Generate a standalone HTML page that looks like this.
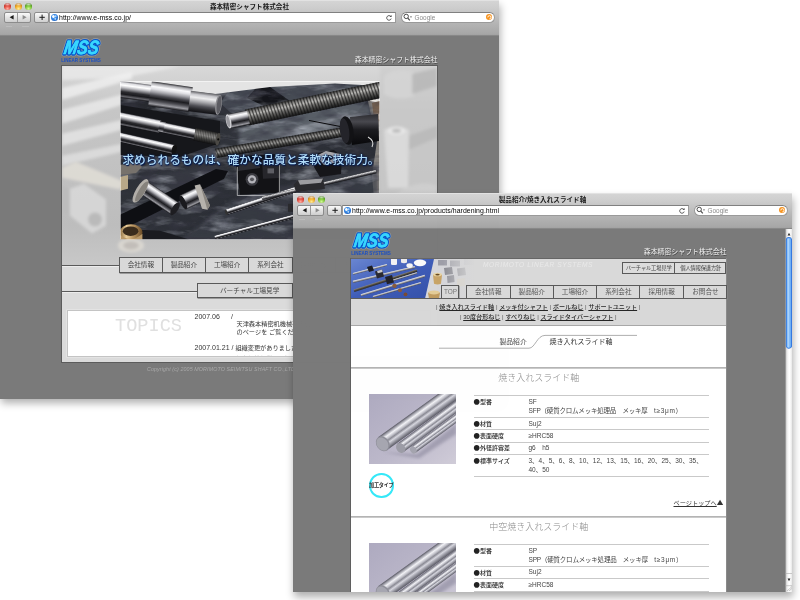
<!DOCTYPE html>
<html lang="ja">
<head>
<meta charset="utf-8">
<title>森本精密シャフト株式会社</title>
<style>
html,body{margin:0;padding:0;}
body{width:800px;height:600px;background:#fff;position:relative;overflow:hidden;
 font-family:"Liberation Sans","Noto Sans CJK JP",sans-serif;-webkit-font-smoothing:antialiased;}
.abs,.win *{position:absolute;box-sizing:border-box;}
.win u,.win br,.win span.s{position:static;}
.win{position:absolute;width:499px;background:#7a7a7a;overflow:hidden;will-change:transform;opacity:.9999;}
.shadow{position:absolute;box-shadow:1px 5px 8px 0 rgba(0,0,0,.32);}
.tb{left:0;top:0;width:499px;height:36px;background:linear-gradient(#ececec 0,#d4d4d4 1.2px,#cdcdcd 8px,#b6b6b6 22px,#a6a6a6 34.4px,#8e8e8e 35.3px,#7a7a7a 36px);}
.tl{width:7px;height:7px;border-radius:50%;top:2.5px;}
.tl.r{left:4px;background:radial-gradient(ellipse 60% 28% at 50% 16%,rgba(255,255,255,.75) 0,rgba(255,255,255,0) 100%),radial-gradient(circle at 50% 82%,#ffb0a4 0,#e24a3e 45%,#b8281e 72%,#7a1610 100%);}
.tl.y{left:14.5px;background:radial-gradient(ellipse 60% 28% at 50% 16%,rgba(255,255,255,.75) 0,rgba(255,255,255,0) 100%),radial-gradient(circle at 50% 82%,#ffee9c 0,#f2ac24 45%,#c27a0c 72%,#7e4c04 100%);}
.tl.g{left:25px;background:radial-gradient(ellipse 60% 28% at 50% 16%,rgba(255,255,255,.75) 0,rgba(255,255,255,0) 100%),radial-gradient(circle at 50% 82%,#d8fa9c 0,#78c432 45%,#468a18 72%,#285808 100%);}
.title{left:0;top:1.5px;width:499px;text-align:center;font-size:6.6px;line-height:9px;color:#1a1a1a;font-weight:700;letter-spacing:0;white-space:nowrap;}
.btn{top:12.2px;height:10.4px;border:.6px solid #8c8c8c;border-radius:2px;background:linear-gradient(#fafafa,#e4e4e4 50%,#cfcfcf);}
.url{left:49px;top:12.2px;width:347.4px;height:10.4px;background:#fff;border:.6px solid #9a9a9a;border-top-color:#808080;}
.urlt{left:59px;top:12.7px;font-size:6.9px;line-height:10px;color:#000;white-space:nowrap;letter-spacing:.05px;}
.srch{left:400.6px;top:12.2px;width:94.2px;height:10.4px;background:#fff;border:.6px solid #9a9a9a;border-top-color:#808080;border-radius:5.5px;}
.goog{left:414.6px;top:12.7px;font-size:6.4px;line-height:10px;color:#8a8a8a;}
.glob{left:50.8px;top:13.6px;width:7.4px;height:7.4px;border-radius:50%;background:radial-gradient(ellipse 22% 26% at 34% 36%,#fff 0,rgba(255,255,255,.9) 60%,rgba(255,255,255,0) 100%),radial-gradient(ellipse 20% 16% at 66% 30%,#f0f8ff 0,rgba(255,255,255,0) 100%),radial-gradient(ellipse 18% 20% at 62% 70%,#e4f2ff 0,rgba(255,255,255,0) 100%),radial-gradient(circle at 45% 40%,#6ab4f8 0,#2f80e0 50%,#1650a8 100%);}
.org{left:486.2px;top:14.3px;width:6.2px;height:6.2px;border-radius:50%;background:#f7931e;}
.cname{font-size:6.9px;line-height:9px;color:#f2f2f2;white-space:nowrap;text-align:right;text-shadow:.5px .5px .5px #444;}
.tab1{top:257.5px;height:15px;line-height:13.6px;box-shadow:.6px .8px 0 #8a8a8a;border:.9px solid #595959;background:#d9d9d9;font-size:6.6px;color:#444;text-align:center;white-space:nowrap;}
.nw{font-size:7px;line-height:9px;color:#333;white-space:nowrap;}
.tabs1{border:.9px solid #595959;background:#d9d9d9;display:flex;box-shadow:.6px .8px 0 #8a8a8a;}
.tabs1 span{position:static;display:block;width:43.3px;height:100%;border-right:.9px solid #595959;font-size:6.6px;line-height:13.4px;color:#444;text-align:center;white-space:nowrap;flex:none;}
.tabs2{border:.9px solid #595959;background:#dcdcdc;display:flex;}
.tabs2 span{position:static;display:block;height:100%;border-right:.9px solid #595959;font-size:5.3px;line-height:10.4px;color:#444;text-align:center;white-space:nowrap;flex:none;letter-spacing:-.2px}
.t2 span{line-height:12.6px;color:#555}
.sn{left:57.5px;width:375.5px;text-align:center;font-size:6.1px;line-height:9px;color:#555;white-space:nowrap;font-weight:500}
.sn u{color:#262626;font-weight:500;text-decoration-thickness:.6px;text-underline-offset:1px}
.hr{left:57.5px;width:375.5px;height:1.6px;background:linear-gradient(#b4b4b4 55%,#e6e6e6);}
.st{left:57.5px;width:375.5px;text-align:center;font-size:9px;line-height:12px;color:#8c8c8c;font-weight:300;white-space:nowrap;padding-left:1px}
.tbl{left:180.5px;width:235.5px;border-top:.7px solid #c9c9c9;}
.tbl .r{position:relative;display:block;height:12.3px;border-bottom:.7px solid #c9c9c9;}
.tbl b{left:0;top:.7px;font-size:6px;line-height:9px;color:#222;font-weight:500;white-space:nowrap}
.bl{font-family:'Noto Sans CJK JP',sans-serif;font-size:6.4px}
.tbl i{left:55px;top:.5px;font-style:normal;font-size:6.5px;line-height:9.6px;color:#444;white-space:nowrap}
.tagl{left:122.4px;top:152.6px;font-size:11.7px;letter-spacing:.2px;line-height:14px;color:#b2dcf6;font-weight:500;white-space:nowrap;letter-spacing:0;text-shadow:0 0 1.5px #0a2a6a,0 0 2px #0a2a6a,.6px .8px 1px #001040;}
</style>
</head>
<body>

<!-- ================= WINDOW 1 ================= -->
<div class="shadow" style="left:0;top:0;width:499px;height:398px"></div>
<div class="win" id="w1" style="left:0;top:0;height:398.5px">
 <div class="tb"></div>
 <div class="tl r"></div><div class="tl y"></div><div class="tl g"></div>
 <div class="title">森本精密シャフト株式会社</div>
 <div class="btn" style="left:4.2px;width:26.4px"></div>
 <div style="left:17.3px;top:12.7px;width:.6px;height:9.5px;background:#9a9a9a"></div>
 <svg style="left:4.5px;top:12.2px" width="26" height="10.5" viewBox="0 0 26 10.5"><path d="M8.6 3 L8.6 7.6 L4.6 5.3Z" fill="#1a1a1a"/><path d="M17.6 3 L17.6 7.6 L21.6 5.3Z" fill="#8c8c8c"/></svg>
 <div class="btn" style="left:33.9px;width:15.2px"></div>
 <svg style="left:34.5px;top:12.2px" width="14.5" height="10.5" viewBox="0 0 14.5 10.5"><path d="M4.4 5.3H9.8M7.1 2.6V8" stroke="#1a1a1a" stroke-width="1" fill="none"/></svg>
 <div style="left:6px;top:26.4px;width:6px;height:.7px;background:#c4c4c4;opacity:.6"></div><div style="left:21.6px;top:26.4px;width:7px;height:.7px;background:#c4c4c4;opacity:.6"></div>
 <div class="url"></div><div class="glob"></div>
 <div class="urlt">http://www.e-mss.co.jp/</div>
 <svg style="left:385.4px;top:13.6px" width="8" height="8" viewBox="0 0 8 8"><path d="M5.9 2.6A2.3 2.3 0 1 0 6.2 4.6" stroke="#444" stroke-width=".9" fill="none"/><path d="M4.6 2.9L6.6 3.1L6.5 1.1Z" fill="#444"/></svg>
 <div class="srch"></div>
 <svg style="left:403.4px;top:13.4px" width="10" height="9" viewBox="0 0 10 9"><circle cx="3.2" cy="3.4" r="2.2" stroke="#4a4a4a" stroke-width="1" fill="none"/><path d="M4.8 5.1L6.8 7.3" stroke="#4a4a4a" stroke-width="1.2"/><path d="M6.9 3.4h2.2l-1.1 1.3z" fill="#4a4a4a"/></svg>
 <div class="goog">Google</div><div class="org"></div><svg style="left:486.2px;top:14.2px" width="6.5" height="6.5" viewBox="0 0 6.5 6.5"><path d="M1.8 3.4A1.6 1.6 0 1 1 3.4 4.9" stroke="#fff" stroke-width=".9" fill="none"/></svg>

 <!-- page -->
 <div id="p1" style="left:61px;top:65px;width:376.5px;height:298px;background:#dbdbdb;border:.8px solid #5c5c5c;"></div>
 <svg style="left:61.8px;top:65.8px" width="375" height="199.4" viewBox="0 0 375 200" preserveAspectRatio="none"><defs><linearGradient id="pg" x1="0" y1="0" x2="0" y2="1"><stop offset="0" stop-color="#d8d8d8"/><stop offset=".22" stop-color="#c6c6c6"/><stop offset=".8" stop-color="#bdbdbd"/><stop offset="1" stop-color="#c8c8c8"/></linearGradient><filter id="pb1"><feGaussianBlur stdDeviation="1.4"/></filter><filter id="pb2"><feGaussianBlur stdDeviation="3"/></filter></defs><rect width="375" height="200" fill="url(#pg)"/><g filter="url(#pb1)" fill="#f2f2f2"><path d="M0 22L70 6L70 13L0 34Z" opacity=".75"/><path d="M0 44L62 28L62 38L0 58Z" opacity=".65"/><path d="M0 68L60 54L60 64L0 80Z" opacity=".6"/><path d="M0 90L60 78L60 86L0 100Z" opacity=".5"/><path d="M0 0H120L60 12L0 14Z" opacity=".6"/></g><g filter="url(#pb1)"><path d="M0 102L14 96L62 116L58 124L0 112Z" fill="#e4e0d8" opacity=".8"/><path d="M6 124L22 118L44 134L44 160L30 168L8 150Z" fill="#d9d9d9" opacity=".85"/><circle cx="33" cy="154" r="7" fill="#b4b4b4" opacity=".8"/><path d="M0 120L8 124L8 150L0 146Z" fill="#bcbcbc"/></g><g filter="url(#pb1)"><ellipse cx="69" cy="180" rx="13" ry="7" fill="#e0dcd4" opacity=".8"/><ellipse cx="69" cy="180" rx="8" ry="4" fill="#b8b4ae" opacity=".7"/></g><g filter="url(#pb1)"><path d="M318 0H375V200H318Z" fill="#c9c9c9" opacity=".6"/><path d="M322 10Q335 0 352 6L352 30Q336 36 322 28Z" fill="#d6d6d6" opacity=".8"/><path d="M350 8L375 2V20L350 28Z" fill="#b4b4b4" opacity=".7"/><path d="M322 64Q335 58 347 64L346 122L326 122Z" fill="#dddddd" opacity=".85"/><ellipse cx="334.5" cy="65" rx="9" ry="4" fill="#e8e8e8"/><ellipse cx="334.5" cy="65" rx="4.5" ry="2" fill="#b8b8b8"/><path d="M347 70L375 60V72L347 84Z" fill="#b6b6b6" opacity=".7"/><path d="M330 132Q352 112 375 120V175Q350 170 330 160Z" fill="#d2d2d2" opacity=".7"/><path d="M340 140Q356 128 375 134V150Q356 146 340 152Z" fill="#b8b8b8" opacity=".6"/></g></svg>
 <svg style="left:60.4px;top:36.4px" width="50" height="28" viewBox="0 0 50 28">
<g font-family="Liberation Sans, sans-serif" font-weight="700" font-style="italic" font-size="19.2" transform="translate(3.3 18.1) skewX(-9) scale(.83 1)">
<text x="0" y="0" fill="none" stroke="#c4c4c4" stroke-width="4.6" stroke-linejoin="round" opacity=".5">MSS</text>
<text x="0" y="0" fill="#38d6ff" stroke="#0a58cc" stroke-width="3.3" stroke-linejoin="round" paint-order="stroke fill">MSS</text>
<text x="0" y="0" fill="#38d6ff" stroke="#38d6ff" stroke-width=".55" stroke-linejoin="round">MSS</text>
</g>
<text x="1.2" y="26.4" font-family="Liberation Sans, sans-serif" font-weight="700" font-size="5.15" fill="#1a4fc4" textLength="39.6" lengthAdjust="spacingAndGlyphs">LINEAR SYSTEMS</text>
</svg>
 <svg class="ph1" style="left:119.6px;top:80.8px" width="260" height="158.8" viewBox="0 0 260 159" preserveAspectRatio="none"><defs>
<linearGradient id="chr" x1="0" y1="0" x2="0" y2="1"><stop offset="0" stop-color="#2a2a2e"/><stop offset="0.08" stop-color="#a8a8ac"/><stop offset="0.2" stop-color="#fafafc"/><stop offset="0.3" stop-color="#e0e0e4"/><stop offset="0.42" stop-color="#a0a0a6"/><stop offset="0.55" stop-color="#4a4a50"/><stop offset="0.66" stop-color="#1c1c20"/><stop offset="0.78" stop-color="#505056"/><stop offset="0.9" stop-color="#9a9aa0"/><stop offset="1" stop-color="#141418"/></linearGradient>
<linearGradient id="chr2" x1="0" y1="0" x2="0" y2="1"><stop offset="0" stop-color="#6a6a70"/><stop offset="0.1" stop-color="#dcdce0"/><stop offset="0.24" stop-color="#ffffff"/><stop offset="0.36" stop-color="#c8c8cc"/><stop offset="0.5" stop-color="#77777c"/><stop offset="0.62" stop-color="#2c2c30"/><stop offset="0.76" stop-color="#1a1a1e"/><stop offset="0.9" stop-color="#66666c"/><stop offset="1" stop-color="#0e0e12"/></linearGradient>
<linearGradient id="chr3" x1="0" y1="0" x2="0" y2="1"><stop offset="0" stop-color="#5c5c60"/><stop offset="0.15" stop-color="#c8c8cc"/><stop offset="0.3" stop-color="#eeeeef"/><stop offset="0.5" stop-color="#a4a4a8"/><stop offset="0.7" stop-color="#505056"/><stop offset="0.85" stop-color="#2a2a2e"/><stop offset="1" stop-color="#121216"/></linearGradient>
<linearGradient id="thr" x1="0" y1="0" x2="0" y2="1"><stop offset="0" stop-color="#2a2a2a"/><stop offset=".18" stop-color="#8a8987"/><stop offset=".36" stop-color="#bab9b6"/><stop offset=".55" stop-color="#747371"/><stop offset=".8" stop-color="#383837"/><stop offset="1" stop-color="#121214"/></linearGradient>
<linearGradient id="thr2" x1="0" y1="0" x2="0" y2="1"><stop offset="0" stop-color="#222222"/><stop offset=".25" stop-color="#7a7977"/><stop offset=".45" stop-color="#989795"/><stop offset=".7" stop-color="#4a4a48"/><stop offset="1" stop-color="#101012"/></linearGradient>
<linearGradient id="blk" x1="0" y1="0" x2="0" y2="1"><stop offset="0" stop-color="#2c2c30"/><stop offset=".25" stop-color="#48484e"/><stop offset=".5" stop-color="#1c1c20"/><stop offset="1" stop-color="#08080a"/></linearGradient>
<linearGradient id="slate" x1="0" y1="0" x2="1" y2="1"><stop offset="0" stop-color="#23252a"/><stop offset=".4" stop-color="#30333a"/><stop offset=".7" stop-color="#2a2d34"/><stop offset="1" stop-color="#363a42"/></linearGradient>
<linearGradient id="brass" x1="0" y1="0" x2="1" y2="0"><stop offset="0" stop-color="#8a6a3c"/><stop offset=".3" stop-color="#e8cc98"/><stop offset=".6" stop-color="#b89460"/><stop offset="1" stop-color="#6a4c28"/></linearGradient>
<filter id="nz" x="0" y="0" width="100%" height="100%"><feTurbulence type="fractalNoise" baseFrequency=".035 .1" numOctaves="4" seed="11" result="t"/><feColorMatrix type="matrix" values="0 0 0 0 .58  0 0 0 0 .61  0 0 0 0 .68  2.6 0 0 0 -1.22"/></filter>
<filter id="nd" x="0" y="0" width="100%" height="100%"><feTurbulence type="fractalNoise" baseFrequency=".05 .12" numOctaves="3" seed="3" result="t"/><feColorMatrix type="matrix" values="0 0 0 0 .04  0 0 0 0 .04  0 0 0 0 .06  0 2.4 0 0 -1.0"/></filter>
<filter id="b1"><feGaussianBlur stdDeviation=".5"/></filter>
<filter id="b2"><feGaussianBlur stdDeviation="1.6"/></filter>
<clipPath id="pc"><rect x="0" y="0" width="260" height="159"/></clipPath>
</defs><g clip-path="url(#pc)"><rect width="260" height="159" fill="url(#slate)"/>
<path d="M244 0H260V159H258L252 95L257 60L250 30Z" fill="#8c8882" filter="url(#b1)"/>
<path d="M246 2H260V22L250 20Z" fill="#e9e6e0"/>
<path d="M252 22L260 20V40L254 38Z" fill="#7a6450"/>
<path d="M100 22L112 6L250 1L254 12L238 30L160 48L120 40Z" fill="#464b54"/>
<path d="M127 17L136 7L150 6L170 20L150 28Z" fill="#14151a"/>
<path d="M118 48L222 22L250 24L252 40L225 50L150 68L120 70Z" fill="#5c626b" opacity=".85" filter="url(#b2)"/>
<path d="M150 52L215 36L222 44L170 60Z" fill="#8a9098" opacity=".5" filter="url(#b2)"/>
<path d="M110 120L200 96L258 84L258 159H120L60 159Z" fill="#3d414a" opacity=".7" filter="url(#b2)"/>
<path d="M20 96L95 84L112 92L40 128Z" fill="#3a3e46" opacity=".6" filter="url(#b2)"/>
<rect width="260" height="159" filter="url(#nz)" opacity=".5"/>
<rect width="260" height="159" filter="url(#nd)" opacity=".6"/>
<path d="M0 0H260V5L215 2.5L150 6L95 13L0 3Z" fill="#e4e4e4"/>
<path d="M0 24L100 40L100 62L60 76L0 74Z" fill="#16171b"/>
<path d="M0 134L96 88L108 90L104 98L8 146L0 148Z" fill="#0e0f13"/>
<path d="M0 148L40 150L70 159H0Z" fill="#1a1b20"/>
<g transform="translate(-2.0 8.0) rotate(7.79)"><rect x="0" y="-8.50" width="38.4" height="17.00" fill="url(#chr2)"/></g>
<g transform="translate(30.0 12.5) rotate(8.46)"><rect x="0" y="-12.50" width="41.5" height="25.00" fill="url(#chr)"/></g>
<g transform="translate(69.5 19.8) rotate(7.59)"><rect x="0" y="-10.25" width="28.8" height="20.50" fill="url(#chr3)"/></g>
<ellipse cx="98.6" cy="23.8" rx="3.2" ry="10.2" transform="rotate(8 98.6 23.8)" fill="#8e8e92"/>
<ellipse cx="99" cy="23.9" rx="2.2" ry="9" transform="rotate(8 99 23.9)" fill="#5c5c62"/>
<g transform="translate(-2.0 37.4) rotate(11.57)"><rect x="0" y="-6.50" width="42.9" height="13.00" fill="url(#chr2)"/></g>
<g transform="translate(39.0 45.5) rotate(12.23)"><rect x="0" y="-5.50" width="6.1" height="11.00" fill="url(#chr)"/></g>
<g transform="translate(44.0 47.0) rotate(11.65)"><rect x="0" y="-5.20" width="32.7" height="10.40" fill="url(#chr2)"/></g>
<g transform="translate(74.5 53.3) rotate(11.78)"><rect x="0" y="-6.30" width="24.0" height="12.60" fill="url(#thr2)"/><path d="M0.0 -6.3L1.2 6.3M1.7 -6.3L2.9 6.3M3.4 -6.3L4.6 6.3M5.1 -6.3L6.3 6.3M6.8 -6.3L8.0 6.3M8.5 -6.3L9.7 6.3M10.2 -6.3L11.4 6.3M11.9 -6.3L13.1 6.3M13.6 -6.3L14.8 6.3M15.3 -6.3L16.5 6.3M17.0 -6.3L18.2 6.3M18.7 -6.3L19.9 6.3M20.4 -6.3L21.6 6.3M22.1 -6.3L23.3 6.3M23.8 -6.3L25.0 6.3" stroke="#111" stroke-width="0.71" opacity="0.5" fill="none"/></g>
<ellipse cx="98" cy="58.3" rx="2.2" ry="6.3" transform="rotate(11 98 58.3)" fill="#4a4844"/>
<circle cx="98.3" cy="58.5" r="1.1" fill="#0a0a0a"/>
<g transform="translate(-2.0 56.0) rotate(12.88)"><rect x="0" y="-4.80" width="57.4" height="9.60" fill="url(#chr2)"/></g>
<ellipse cx="54.2" cy="68.9" rx="2.4" ry="4.8" transform="rotate(13 54.2 68.9)" fill="#111"/>
<path d="M0 84L18 80L22 86L16 92L0 94Z" fill="#77726c"/>
<path d="M0 96L8 94L8 108L0 110Z" fill="#b8a888"/>
<g transform="translate(127.0 36.6) rotate(-11.72)"><rect x="0" y="-8.20" width="137.9" height="16.40" fill="url(#thr)"/><path d="M0.0 -8.2L2.2 8.2M3.1 -8.2L5.3 8.2M6.2 -8.2L8.4 8.2M9.3 -8.2L11.5 8.2M12.4 -8.2L14.6 8.2M15.5 -8.2L17.7 8.2M18.6 -8.2L20.8 8.2M21.7 -8.2L23.9 8.2M24.8 -8.2L27.0 8.2M27.9 -8.2L30.1 8.2M31.0 -8.2L33.2 8.2M34.1 -8.2L36.3 8.2M37.2 -8.2L39.4 8.2M40.3 -8.2L42.5 8.2M43.4 -8.2L45.6 8.2M46.5 -8.2L48.7 8.2M49.6 -8.2L51.8 8.2M52.7 -8.2L54.9 8.2M55.8 -8.2L58.0 8.2M58.9 -8.2L61.1 8.2M62.0 -8.2L64.2 8.2M65.1 -8.2L67.3 8.2M68.2 -8.2L70.4 8.2M71.3 -8.2L73.5 8.2M74.4 -8.2L76.6 8.2M77.5 -8.2L79.7 8.2M80.6 -8.2L82.8 8.2M83.7 -8.2L85.9 8.2M86.8 -8.2L89.0 8.2M89.9 -8.2L92.1 8.2M93.0 -8.2L95.2 8.2M96.1 -8.2L98.3 8.2M99.2 -8.2L101.4 8.2M102.3 -8.2L104.5 8.2M105.4 -8.2L107.6 8.2M108.5 -8.2L110.7 8.2M111.6 -8.2L113.8 8.2M114.7 -8.2L116.9 8.2M117.8 -8.2L120.0 8.2M120.9 -8.2L123.1 8.2M124.0 -8.2L126.2 8.2M127.1 -8.2L129.3 8.2M130.2 -8.2L132.4 8.2M133.3 -8.2L135.5 8.2M136.4 -8.2L138.6 8.2" stroke="#111" stroke-width="1.30" opacity="0.62" fill="none"/></g>
<g transform="translate(108.5 40.5) rotate(-11.86)"><rect x="0" y="-7.30" width="20.4" height="14.60" fill="url(#chr)"/></g>
<ellipse cx="108.6" cy="40.5" rx="2.6" ry="7.3" transform="rotate(-12 108.6 40.5)" fill="#d4d4d8"/>
<ellipse cx="108.2" cy="40.6" rx="1.7" ry="5.8" transform="rotate(-12 108.2 40.6)" fill="#9a9aa0"/>
<path d="M189 39.5L220 45.5" stroke="#0a0a0c" stroke-width="1"/>
<g transform="translate(96.0 72.5) rotate(-9.58)"><rect x="0" y="-4.70" width="132.9" height="9.40" fill="url(#thr2)"/><path d="M0.0 -4.7L2.6 4.7M3.0 -4.7L5.6 4.7M6.0 -4.7L8.6 4.7M9.0 -4.7L11.6 4.7M12.0 -4.7L14.6 4.7M15.0 -4.7L17.6 4.7M18.0 -4.7L20.6 4.7M21.0 -4.7L23.6 4.7M24.0 -4.7L26.6 4.7M27.0 -4.7L29.6 4.7M30.0 -4.7L32.6 4.7M33.0 -4.7L35.6 4.7M36.0 -4.7L38.6 4.7M39.0 -4.7L41.6 4.7M42.0 -4.7L44.6 4.7M45.0 -4.7L47.6 4.7M48.0 -4.7L50.6 4.7M51.0 -4.7L53.6 4.7M54.0 -4.7L56.6 4.7M57.0 -4.7L59.6 4.7M60.0 -4.7L62.6 4.7M63.0 -4.7L65.6 4.7M66.0 -4.7L68.6 4.7M69.0 -4.7L71.6 4.7M72.0 -4.7L74.6 4.7M75.0 -4.7L77.6 4.7M78.0 -4.7L80.6 4.7M81.0 -4.7L83.6 4.7M84.0 -4.7L86.6 4.7M87.0 -4.7L89.6 4.7M90.0 -4.7L92.6 4.7M93.0 -4.7L95.6 4.7M96.0 -4.7L98.6 4.7M99.0 -4.7L101.6 4.7M102.0 -4.7L104.6 4.7M105.0 -4.7L107.6 4.7M108.0 -4.7L110.6 4.7M111.0 -4.7L113.6 4.7M114.0 -4.7L116.6 4.7M117.0 -4.7L119.6 4.7M120.0 -4.7L122.6 4.7M123.0 -4.7L125.6 4.7M126.0 -4.7L128.6 4.7M129.0 -4.7L131.6 4.7M132.0 -4.7L134.6 4.7" stroke="#111" stroke-width="1.26" opacity="0.55" fill="none"/></g>
<path d="M230 36L258 33L259 60L232 64Z" fill="url(#blk)"/>
<ellipse cx="226.8" cy="49.5" rx="6.6" ry="14.4" transform="rotate(-8 226.8 49.5)" fill="#121215"/>
<ellipse cx="224.6" cy="49.8" rx="4.6" ry="12.6" transform="rotate(-8 224.6 49.8)" fill="#24242a"/>
<path d="M248 56Q255 60 252 66" stroke="#d8d8d8" stroke-width="1.1" fill="none"/>
<path d="M194 86L198 72L214 69L222 76L221 93L200 96Z" fill="#16161a"/>
<path d="M196 75L206 70L220 73L218 81L204 84Z" fill="#a8a8ac"/>
<ellipse cx="208" cy="76.6" rx="5" ry="2.6" fill="#1a1a1e"/>
<path d="M116 84L122 75L156 73L160 79L160 112L120 114Z" fill="#131316"/>
<path d="M119 82L139 79L140 87L118 90Z" fill="#2e2e34"/>
<path d="M142 78L158 76L159 97L143 98Z" fill="#26262b"/>
<rect x="147.5" y="87.5" width="6.5" height="5" fill="#5e5e64"/>
<circle cx="132" cy="98.5" r="6.4" fill="#3c3c42"/><circle cx="132" cy="98.5" r="4.2" fill="#b4b4ba"/><circle cx="132" cy="98.5" r="2" fill="#55555a"/>
<path d="M117.3 86V114.6H159.4V84" stroke="#e8e8e8" stroke-width=".7" fill="none" opacity=".9"/>
<g transform="translate(24.0 107.0) rotate(33.91)"><rect x="0" y="-7.25" width="36.7" height="14.50" fill="url(#chr)"/></g>
<ellipse cx="55" cy="128" rx="3" ry="7.4" transform="rotate(34 55 128)" fill="#1d1d21"/>
<ellipse cx="20.5" cy="110" rx="4.6" ry="13.4" transform="rotate(31 20.5 110)" fill="#b2aea8"/>
<ellipse cx="21.6" cy="110.6" rx="3" ry="11.6" transform="rotate(31 21.6 110.6)" fill="#86827c"/>
<g transform="translate(63.0 121.5) rotate(-25.20)"><rect x="0" y="-7.75" width="18.8" height="15.50" fill="url(#chr)"/></g>
<ellipse cx="63.2" cy="121.6" rx="2.6" ry="7.6" transform="rotate(-25 63.2 121.6)" fill="#1a1a1e"/>
<path d="M74.6 104.6L80 103.4L90 124.6L87.4 129L82 128Z" fill="#b6b2ac"/>
<path d="M80 103.4L90 124.6L87.4 129Z" fill="#8a8680"/>
<ellipse cx="11" cy="151.5" rx="11.4" ry="8" fill="url(#brass)"/>
<ellipse cx="10.6" cy="150.4" rx="7.8" ry="4.8" fill="#3a2c1c"/>
<path d="M0 154Q11 163 22.4 153V159H0Z" fill="#b89868"/>
<g transform="translate(106.0 131.4) rotate(-18.12)"><rect x="0" y="-2.80" width="73.7" height="5.60" fill="url(#chr2)"/></g>
<ellipse cx="106.2" cy="131.4" rx="1.2" ry="2.8" transform="rotate(-18 106.2 131.4)" fill="#333"/>
<g transform="translate(142.0 117.5) rotate(-13.32)"><rect x="0" y="-1.80" width="117.2" height="3.60" fill="url(#chr3)"/><path d="M0.0 -1.8L0.6 1.8M1.5 -1.8L2.1 1.8M3.0 -1.8L3.6 1.8M4.5 -1.8L5.1 1.8M6.0 -1.8L6.6 1.8M7.5 -1.8L8.1 1.8M9.0 -1.8L9.6 1.8M10.5 -1.8L11.1 1.8M12.0 -1.8L12.6 1.8M13.5 -1.8L14.1 1.8M15.0 -1.8L15.6 1.8M16.5 -1.8L17.1 1.8M18.0 -1.8L18.6 1.8M19.5 -1.8L20.1 1.8M21.0 -1.8L21.6 1.8M22.5 -1.8L23.1 1.8M24.0 -1.8L24.6 1.8M25.5 -1.8L26.1 1.8M27.0 -1.8L27.6 1.8M28.5 -1.8L29.1 1.8M30.0 -1.8L30.6 1.8M31.5 -1.8L32.1 1.8M33.0 -1.8L33.6 1.8M34.5 -1.8L35.1 1.8M36.0 -1.8L36.6 1.8M37.5 -1.8L38.1 1.8M39.0 -1.8L39.6 1.8M40.5 -1.8L41.1 1.8M42.0 -1.8L42.6 1.8M43.5 -1.8L44.1 1.8M45.0 -1.8L45.6 1.8M46.5 -1.8L47.1 1.8M48.0 -1.8L48.6 1.8M49.5 -1.8L50.1 1.8M51.0 -1.8L51.6 1.8M52.5 -1.8L53.1 1.8M54.0 -1.8L54.6 1.8M55.5 -1.8L56.1 1.8M57.0 -1.8L57.6 1.8M58.5 -1.8L59.1 1.8M60.0 -1.8L60.6 1.8M61.5 -1.8L62.1 1.8M63.0 -1.8L63.6 1.8M64.5 -1.8L65.1 1.8M66.0 -1.8L66.6 1.8M67.5 -1.8L68.1 1.8M69.0 -1.8L69.6 1.8M70.5 -1.8L71.1 1.8M72.0 -1.8L72.6 1.8M73.5 -1.8L74.1 1.8M75.0 -1.8L75.6 1.8M76.5 -1.8L77.1 1.8M78.0 -1.8L78.6 1.8M79.5 -1.8L80.1 1.8M81.0 -1.8L81.6 1.8M82.5 -1.8L83.1 1.8M84.0 -1.8L84.6 1.8M85.5 -1.8L86.1 1.8M87.0 -1.8L87.6 1.8M88.5 -1.8L89.1 1.8M90.0 -1.8L90.6 1.8M91.5 -1.8L92.1 1.8M93.0 -1.8L93.6 1.8M94.5 -1.8L95.1 1.8M96.0 -1.8L96.6 1.8M97.5 -1.8L98.1 1.8M99.0 -1.8L99.6 1.8M100.5 -1.8L101.1 1.8M102.0 -1.8L102.6 1.8M103.5 -1.8L104.1 1.8M105.0 -1.8L105.6 1.8M106.5 -1.8L107.1 1.8M108.0 -1.8L108.6 1.8M109.5 -1.8L110.1 1.8M111.0 -1.8L111.6 1.8M112.5 -1.8L113.1 1.8M114.0 -1.8L114.6 1.8M115.5 -1.8L116.1 1.8M117.0 -1.8L117.6 1.8" stroke="#222" stroke-width="0.63" opacity="0.35" fill="none"/></g>
<path d="M173.5 104L178 99.5L203 97.5L205 108L176 111Z" fill="#2a2a2e"/>
<path d="M178 99.5L203 97.5L201 102L180 104Z" fill="#9c9ca0"/>
<g transform="translate(95.0 156.8) rotate(-15.06)"><rect x="0" y="-2.00" width="83.9" height="4.00" fill="url(#chr2)"/></g>
<rect x="168" y="123" width="7" height="8" fill="#2c2c30"/></g></svg>
 <div style="left:119.6px;top:80.8px;width:260px;height:158.8px;border:.7px solid rgba(255,255,255,.55)"></div>
 <div class="tagl">求められるものは、確かな品質と柔軟な技術力。</div>
 <!-- nav row 1 -->
 <div style="left:61.5px;top:265px;width:58px;height:2px;background:linear-gradient(#5a5a5a 50%,#ececec 50%)"></div>
 <div class="tabs1" style="left:119px;top:257.3px;width:260px;height:15.3px">
  <span style="width:42.7px">会社情報</span><span>製品紹介</span><span>工場紹介</span><span>系列会社</span><span>採用情報</span><span>お問合せ</span>
 </div>
 <!-- nav row 2 -->
 <div style="left:61.5px;top:290.6px;width:136px;height:2px;background:linear-gradient(#5a5a5a 50%,#ececec 50%)"></div>
 <div class="tab1" style="left:197px;top:283px;width:96px;height:15.4px;line-height:14px;text-align:left;padding-left:22px">バーチャル工場見学</div>
 <!-- topics -->
 <div style="left:67px;top:310px;width:364px;height:46.5px;background:#fff;border:.8px solid #c4c4c4;box-shadow:0 0 0 .6px #e8e8e8;overflow:hidden">
  <div style="left:47px;top:5px;font-family:'Liberation Mono',monospace;font-size:18.6px;line-height:22px;color:#e0e0e0;letter-spacing:0">TOPICS</div>
  <div class="nw" style="left:126.5px;top:0.5px">2007.06</div>
  <div class="nw" style="left:163px;top:0.5px">/</div>
  <div class="nw" style="left:168.5px;top:7.5px;font-size:6.2px">天津森本精密机機械有限公司</div>
  <div class="nw" style="left:168.5px;top:15.5px;font-size:6.2px">のページを ご覧ください。</div>
  <div class="nw" style="left:126.5px;top:32px">2007.01.21&nbsp;/&nbsp;<span style="font-size:6.2px">組織変更がありました。</span></div>
  <div class="nw" style="left:126.5px;top:42.5px">2006.12.20&nbsp;/&nbsp;<span style="font-size:6.2px">年末年始休業のお知らせ</span></div>
 </div>
 <div style="left:147px;top:365px;font-size:5.3px;line-height:8px;font-style:italic;color:#a9a9a9;white-space:nowrap;letter-spacing:.12px">Copyright (c) 2005 MORIMOTO SEIMITSU SHAFT CO.,LTD. All Rights Reserved.</div>
 <div class="cname" style="left:300px;top:54.5px;width:137.5px">森本精密シャフト株式会社</div>
</div>

<!-- ================= WINDOW 2 ================= -->
<div class="shadow" style="left:293px;top:193px;width:499px;height:399px"></div>
<div class="win" id="w2" style="left:293px;top:193px;height:399px">
 <div class="tb"></div>
 <div class="tl r"></div><div class="tl y"></div><div class="tl g"></div>
 <div class="title">製品紹介/焼き入れスライド軸</div>
 <div class="btn" style="left:4.2px;width:26.4px"></div>
 <div style="left:17.3px;top:12.7px;width:.6px;height:9.5px;background:#9a9a9a"></div>
 <svg style="left:4.5px;top:12.2px" width="26" height="10.5" viewBox="0 0 26 10.5"><path d="M8.6 3 L8.6 7.6 L4.6 5.3Z" fill="#1a1a1a"/><path d="M17.6 3 L17.6 7.6 L21.6 5.3Z" fill="#8c8c8c"/></svg>
 <div class="btn" style="left:33.9px;width:15.2px"></div>
 <svg style="left:34.5px;top:12.2px" width="14.5" height="10.5" viewBox="0 0 14.5 10.5"><path d="M4.4 5.3H9.8M7.1 2.6V8" stroke="#1a1a1a" stroke-width="1" fill="none"/></svg>
 <div style="left:6px;top:26.4px;width:6px;height:.7px;background:#c4c4c4;opacity:.6"></div><div style="left:21.6px;top:26.4px;width:7px;height:.7px;background:#c4c4c4;opacity:.6"></div>
 <div class="url"></div><div class="glob"></div>
 <div class="urlt">http://www.e-mss.co.jp/products/hardening.html</div>
 <svg style="left:385.4px;top:13.6px" width="8" height="8" viewBox="0 0 8 8"><path d="M5.9 2.6A2.3 2.3 0 1 0 6.2 4.6" stroke="#444" stroke-width=".9" fill="none"/><path d="M4.6 2.9L6.6 3.1L6.5 1.1Z" fill="#444"/></svg>
 <div class="srch"></div>
 <svg style="left:403.4px;top:13.4px" width="10" height="9" viewBox="0 0 10 9"><circle cx="3.2" cy="3.4" r="2.2" stroke="#4a4a4a" stroke-width="1" fill="none"/><path d="M4.8 5.1L6.8 7.3" stroke="#4a4a4a" stroke-width="1.2"/><path d="M6.9 3.4h2.2l-1.1 1.3z" fill="#4a4a4a"/></svg>
 <div class="goog">Google</div><div class="org"></div><svg style="left:486.2px;top:14.2px" width="6.5" height="6.5" viewBox="0 0 6.5 6.5"><path d="M1.8 3.4A1.6 1.6 0 1 1 3.4 4.9" stroke="#fff" stroke-width=".9" fill="none"/></svg>

 <!-- page -->
 <div id="p2" style="left:57px;top:65px;width:376.5px;height:334px;background:#fff;border-left:.8px solid #5f5f5f;border-right:.8px solid #8a8a8a"></div>
 <svg style="left:57.4px;top:36px" width="50" height="28" viewBox="0 0 50 28">
<g font-family="Liberation Sans, sans-serif" font-weight="700" font-style="italic" font-size="19.2" transform="translate(3.3 18.1) skewX(-9) scale(.83 1)">
<text x="0" y="0" fill="none" stroke="#c4c4c4" stroke-width="4.6" stroke-linejoin="round" opacity=".5">MSS</text>
<text x="0" y="0" fill="#38d6ff" stroke="#0a58cc" stroke-width="3.3" stroke-linejoin="round" paint-order="stroke fill">MSS</text>
<text x="0" y="0" fill="#38d6ff" stroke="#38d6ff" stroke-width=".55" stroke-linejoin="round">MSS</text>
</g>
<text x="1.2" y="26.4" font-family="Liberation Sans, sans-serif" font-weight="700" font-size="5.15" fill="#1a4fc4" textLength="39.6" lengthAdjust="spacingAndGlyphs">LINEAR SYSTEMS</text>
</svg>
 <!-- header -->
 <div style="left:57.5px;top:65px;width:375.5px;height:41px;background:#d9d9d9;border-top:.8px solid #666"></div>
 <svg style="left:57.6px;top:65.6px" width="125" height="39.8" viewBox="0 0 125 40" preserveAspectRatio="none"><defs>
<linearGradient id="hb" x1="0" y1="0" x2="1" y2="1"><stop offset="0" stop-color="#6a86d2"/><stop offset=".5" stop-color="#3f5db8"/><stop offset="1" stop-color="#3450a8"/></linearGradient>
<linearGradient id="hf" x1="0" y1="0" x2="1" y2="0"><stop offset="0" stop-color="#d9d9d9" stop-opacity="0"/><stop offset="1" stop-color="#d9d9d9" stop-opacity="1"/></linearGradient>
<linearGradient id="hr" x1="0" y1="0" x2="0" y2="1"><stop offset="0" stop-color="#f0f0f0"/><stop offset=".5" stop-color="#a8a8ac"/><stop offset="1" stop-color="#505058"/></linearGradient>
<linearGradient id="hd" x1="0" y1="0" x2="0" y2="1"><stop offset="0" stop-color="#8a8478"/><stop offset=".5" stop-color="#4c4840"/><stop offset="1" stop-color="#2a2824"/></linearGradient>
<filter id="hbl"><feGaussianBlur stdDeviation=".35"/></filter>
</defs><rect width="125" height="40" fill="#d6d6da"/><path d="M0 0H83L74 40H0Z" fill="url(#hb)"/><g filter="url(#hbl)"><g transform="translate(2.0 15.0) rotate(-14.83)"><rect x="0" y="-0.90" width="35.2" height="1.80" fill="url(#hr)"/></g><g transform="translate(2.0 23.0) rotate(-13.60)"><rect x="0" y="-1.10" width="63.8" height="2.20" fill="url(#hr)"/></g><g transform="translate(3.0 32.0) rotate(-18.02)"><rect x="0" y="-1.30" width="66.3" height="2.60" fill="url(#hd)"/></g><g transform="translate(10.0 36.5) rotate(-16.95)"><rect x="0" y="-1.10" width="66.9" height="2.20" fill="url(#hr)"/></g><g transform="translate(22.0 38.0) rotate(-16.26)"><rect x="0" y="-0.90" width="50.0" height="1.80" fill="url(#hr)"/></g><g transform="translate(40.0 22.0) rotate(-17.10)"><rect x="0" y="-0.80" width="27.2" height="1.60" fill="url(#hr)"/></g><path d="M16 8L21 6.5L23 11.5L18 13Z" fill="#1e1e22"/><path d="M24 12.5L31 10.5L33 17.5L26 19.5Z" fill="#2a2a30"/><path d="M26 12L31 10.6L31.6 13L26.8 14.4Z" fill="#c8c8cc"/><path d="M34 18L41 16L43 23.5L36 25.5Z" fill="#24242a"/><circle cx="43.5" cy="27" r="2.2" fill="#8a5a3a"/><circle cx="49" cy="31.5" r="2" fill="#8a5a3a"/><circle cx="54.5" cy="35.5" r="1.9" fill="#7a4c30"/><path d="M40 0H46V5.5Q43 6.8 40 5.5Z" fill="#f4f4f4"/><path d="M50 0H56V3.6Q53 4.8 50 3.6Z" fill="#ececec"/><ellipse cx="58.6" cy="6.6" rx="3.2" ry="2.4" fill="#f6f6f6"/><ellipse cx="69" cy="3.8" rx="6.2" ry="3.4" fill="#fafafa"/><path d="M82 16Q86.5 13.5 91 16L90 25Q86.5 26.5 83 25Z" fill="#c8a468"/><ellipse cx="86.5" cy="15.6" rx="4.4" ry="1.8" fill="#e8d4a4"/><ellipse cx="86.5" cy="15.6" rx="2.2" ry=".9" fill="#6a4c24"/><path d="M77 34Q83 31 89 34L88 40H78Z" fill="#c09c60"/><ellipse cx="83" cy="33.6" rx="5.6" ry="2" fill="#e4cc98"/><g opacity=".75"><rect x="87" y="1" width="9" height="5.5" fill="#8e8e98"/><rect x="99" y="1.5" width="10" height="6" fill="#9c9ca4"/><path d="M93 9L101 8L102 15L94 16Z" fill="#70707a"/><path d="M106 9.5L114 8.5L115 16L107 17Z" fill="#8a8a92"/><path d="M96 17L103 16L103.6 23L96.6 24Z" fill="#7c7c86"/><path d="M106 20L114 19L114 27L106 28Z" fill="#dcd4c4"/><rect x="113" y="0" width="10" height="6" fill="#b8b8be" opacity=".6"/></g></g><rect x="92" y="0" width="33" height="40" fill="url(#hf)"/></svg>
 <div style="left:190px;top:66.5px;font-size:6.6px;line-height:9px;font-style:italic;color:#f4f4f4;letter-spacing:.62px;white-space:nowrap;opacity:.6">MORIMOTO LINEAR SYSTEMS</div>
 <div class="tabs2" style="left:329.3px;top:69.3px;width:104px;height:12px">
  <span style="width:51.6px">バーチャル工場見学</span><span style="width:51.6px;border-right:0">個人情報保護方針</span>
 </div>
 <div class="tabs1" style="left:148px;top:91.6px;width:18px;height:14px;color:#777"><span style="width:17px;border-right:0;line-height:12.6px;font-size:6.4px;color:#777">TOP</span></div>
 <div class="tabs1 t2" style="left:173px;top:91.6px;width:260.6px;height:14px">
  <span style="width:43.6px">会社情報</span><span>製品紹介</span><span>工場紹介</span><span>系列会社</span><span>採用情報</span><span style="border-right:0">お問合せ</span>
 </div>
 <div style="left:57.5px;top:105.2px;width:376px;height:1px;background:#5e5e5e"></div>
 <!-- subnav -->
 <div style="left:57.5px;top:106.2px;width:375.5px;height:26.4px;background:#d8d8d8;border-bottom:.8px solid #a8a8a8"></div>
 <div class="sn" style="top:108.8px">|&nbsp;<u>焼き入れスライド軸</u>&nbsp;|&nbsp;<u>メッキ付シャフト</u>&nbsp;|&nbsp;<u>ボールねじ</u>&nbsp;|&nbsp;<u>サポートユニット</u>&nbsp;|</div>
 <div class="sn" style="top:119.4px">|&nbsp;<u>30度台形ねじ</u>&nbsp;|&nbsp;<u>すべりねじ</u>&nbsp;|&nbsp;<u>スライドタイバーシャフト</u>&nbsp;|</div>
 <!-- breadcrumb -->
 <svg style="left:140px;top:138px" width="210" height="20" viewBox="0 0 210 20"><path d="M6 17.2 H96 C102 17.2 104 4.4 112 4.4 H204" fill="none" stroke="#999" stroke-width=".8"/></svg>
 <div style="left:206.5px;top:143.5px;font-size:6.8px;line-height:9px;color:#444;white-space:nowrap">製品紹介</div>
 <div style="left:256.5px;top:143.5px;font-size:7px;line-height:9px;color:#333;white-space:nowrap">焼き入れスライド軸</div>

 <!-- section 1 -->
 <div class="hr" style="top:174px"></div>
 <div class="st" style="top:178.5px">焼き入れスライド軸</div>
 <svg style="left:75.8px;top:200.8px" width="87.2" height="70" viewBox="0 0 87 70" preserveAspectRatio="xMinYMin slice"><defs>
<linearGradient id="qbg" x1="0" y1="0" x2="1" y2="1"><stop offset="0" stop-color="#aeaac0"/><stop offset=".55" stop-color="#bcb8ca"/><stop offset="1" stop-color="#d0ccd8"/></linearGradient>
<linearGradient id="qr" gradientUnits="objectBoundingBox" x1="0" y1="0" x2="0" y2="1"><stop offset="0" stop-color="#5a5a64"/><stop offset=".1" stop-color="#9a9aa4"/><stop offset=".26" stop-color="#f2f2f6"/><stop offset=".4" stop-color="#c4c4cc"/><stop offset=".52" stop-color="#8a8a94"/><stop offset=".66" stop-color="#d6d6de"/><stop offset=".8" stop-color="#a2a2ac"/><stop offset="1" stop-color="#585862"/></linearGradient>
<filter id="qb"><feGaussianBlur stdDeviation=".3"/></filter>
<filter id="qs"><feGaussianBlur stdDeviation="1.5"/></filter>
</defs><rect width="87" height="70" fill="url(#qbg)"/><path d="M14 58L48 60L87 30V40L50 64Z" fill="#77748a" opacity=".45" filter="url(#qs)"/><g filter="url(#qb)"><g transform="translate(13.6 49.6) rotate(-35.83)"><rect x="0" y="-7.80" width="96.7" height="15.60" fill="url(#qr)"/></g><ellipse cx="13.8" cy="49.6" rx="6.4" ry="8" transform="rotate(-36 13.8 49.6)" fill="#8e8e98"/><ellipse cx="13.4" cy="49.9" rx="5.4" ry="7" transform="rotate(-36 13.4 49.9)" fill="#a6a6b0"/><g transform="translate(31.4 53.8) rotate(-36.47)"><rect x="0" y="-5.20" width="75.4" height="10.40" fill="url(#qr)"/></g><ellipse cx="31.6" cy="53.8" rx="4.2" ry="5.3" transform="rotate(-36 31.6 53.8)" fill="#9c9ca6"/><g transform="translate(44.0 55.8) rotate(-36.25)"><rect x="0" y="-3.70" width="59.5" height="7.40" fill="url(#qr)"/></g><ellipse cx="44.2" cy="55.8" rx="3" ry="3.8" transform="rotate(-36 44.2 55.8)" fill="#a4a4ae"/></g></svg>
 <div class="tbl" style="top:202.4px">
  <div class="r" style="height:21.8px"><b><span class="s bl">●</span>型番</b><i>SF<br><span class="s" style="letter-spacing:-.2px">SFP（硬質クロムメッキ処理品　メッキ厚　<span class="s" style="letter-spacing:.7px">t≥3μm</span>）</span></i></div>
  <div class="r"><b><span class="s bl">●</span>材質</b><i>Suj2</i></div>
  <div class="r"><b><span class="s bl">●</span>表面硬度</b><i>≥HRC58</i></div>
  <div class="r"><b><span class="s bl">●</span>外径許容差</b><i>g6　h5</i></div>
  <div class="r" style="height:21.6px"><b><span class="s bl">●</span>標準サイズ</b><i>3、4、5、6、8、10、12、13、15、16、20、25、30、35、<br>40、50</i></div>
 </div>
 <div style="left:76px;top:280px;width:24.5px;height:24.5px;border:2px solid #35e8f8;border-radius:50%"></div>
 <div style="left:70px;top:288px;width:36.5px;text-align:center;font-size:5.2px;line-height:8px;color:#333;font-weight:700;white-space:nowrap;letter-spacing:-.3px">加工タイプ</div>
 <div style="left:380.5px;top:305px;font-size:6.2px;line-height:9px;color:#333;white-space:nowrap"><u>ページトップへ</u><span class="s bl" style="font-size:6.6px">▲</span></div>

 <!-- section 2 -->
 <div class="hr" style="top:323px"></div>
 <div class="st" style="top:327.8px">中空焼き入れスライド軸</div>
 <svg style="left:75.8px;top:350px" width="87.2" height="49" viewBox="0 0 87 49" preserveAspectRatio="xMinYMin slice"><defs>
<linearGradient id="zbg" x1="0" y1="0" x2="1" y2="1"><stop offset="0" stop-color="#aeaac0"/><stop offset=".55" stop-color="#bcb8ca"/><stop offset="1" stop-color="#d0ccd8"/></linearGradient>
<linearGradient id="zr" gradientUnits="objectBoundingBox" x1="0" y1="0" x2="0" y2="1"><stop offset="0" stop-color="#5a5a64"/><stop offset=".1" stop-color="#9a9aa4"/><stop offset=".26" stop-color="#f2f2f6"/><stop offset=".4" stop-color="#c4c4cc"/><stop offset=".52" stop-color="#8a8a94"/><stop offset=".66" stop-color="#d6d6de"/><stop offset=".8" stop-color="#a2a2ac"/><stop offset="1" stop-color="#585862"/></linearGradient>
<filter id="zb"><feGaussianBlur stdDeviation=".3"/></filter>
<filter id="zs"><feGaussianBlur stdDeviation="1.5"/></filter>
</defs><rect width="87" height="70" fill="url(#zbg)"/><path d="M14 58L48 60L87 30V40L50 64Z" fill="#77748a" opacity=".45" filter="url(#zs)"/><g filter="url(#zb)"><g transform="translate(13.6 49.6) rotate(-35.83)"><rect x="0" y="-7.80" width="96.7" height="15.60" fill="url(#zr)"/></g><ellipse cx="13.8" cy="49.6" rx="6.4" ry="8" transform="rotate(-36 13.8 49.6)" fill="#8e8e98"/><ellipse cx="13.4" cy="49.9" rx="5.4" ry="7" transform="rotate(-36 13.4 49.9)" fill="#a6a6b0"/><g transform="translate(31.4 53.8) rotate(-36.47)"><rect x="0" y="-5.20" width="75.4" height="10.40" fill="url(#zr)"/></g><ellipse cx="31.6" cy="53.8" rx="4.2" ry="5.3" transform="rotate(-36 31.6 53.8)" fill="#9c9ca6"/><g transform="translate(44.0 55.8) rotate(-36.25)"><rect x="0" y="-3.70" width="59.5" height="7.40" fill="url(#zr)"/></g><ellipse cx="44.2" cy="55.8" rx="3" ry="3.8" transform="rotate(-36 44.2 55.8)" fill="#a4a4ae"/></g></svg>
 <div class="tbl" style="top:351.2px">
  <div class="r" style="height:21.8px"><b><span class="s bl">●</span>型番</b><i>SP<br><span class="s" style="letter-spacing:-.2px">SPP（硬質クロムメッキ処理品　メッキ厚　<span class="s" style="letter-spacing:.7px">t≥3μm</span>）</span></i></div>
  <div class="r"><b><span class="s bl">●</span>材質</b><i>Suj2</i></div>
  <div class="r"><b><span class="s bl">●</span>表面硬度</b><i>≥HRC58</i></div>
  <div class="r"><b><span class="s bl">●</span>外径許容差</b><i>g6　h5</i></div>
 </div>

 <!-- scrollbar -->
 <div style="left:491.5px;top:36px;width:7.5px;height:363px;background:linear-gradient(90deg,#cfcfcf 0,#f6f6f6 30%,#ffffff 60%,#e8e8e8 100%);border-left:.6px solid #9a9a9a"></div>
 <svg style="left:491.5px;top:36px" width="7.5" height="363" viewBox="0 0 7.5 363">
  <path d="M2.6 6.6 L5.4 6.6 L4 3.8Z" fill="#222"/>
  <rect x=".9" y="8.1" width="6.2" height="111.6" rx="3.1" fill="#2f74de"/>
  <rect x="1.7" y="8.8" width="4.4" height="110.2" rx="2.2" fill="#6fb0f6"/>
  <rect x="2.4" y="9.4" width="2" height="109" rx="1" fill="#a9d3fd"/>
  <rect x=".6" y="344" width="6.9" height=".6" fill="#aaa"/>
  <path d="M2.6 349.4 L5.4 349.4 L4 352.2Z" fill="#222"/>
  <rect x=".6" y="356.5" width="6.9" height=".6" fill="#aaa"/>
  <path d="M2 362 L7 357.6 M4 362 L7 359.4" stroke="#999" stroke-width=".5"/>
 </svg>
 <div class="cname" style="left:296px;top:53.5px;width:137.5px">森本精密シャフト株式会社</div>
</div>

</body>
</html>
